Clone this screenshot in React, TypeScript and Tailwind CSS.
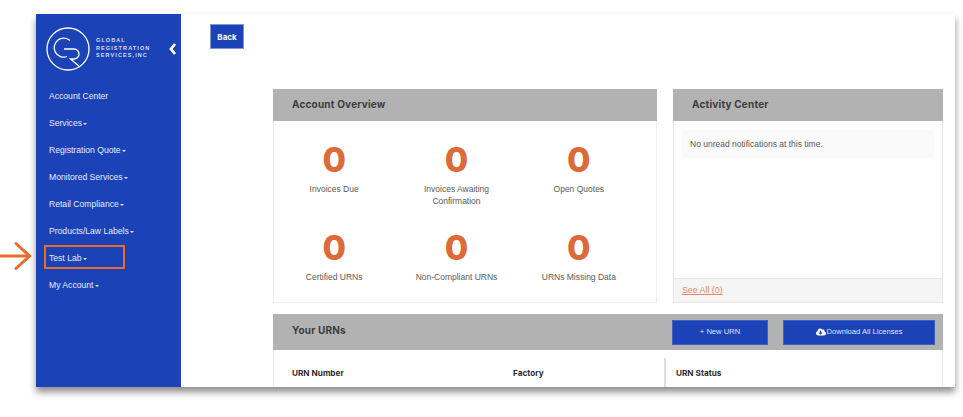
import { FaCloudDownloadAlt } from 'react-icons/fa';

const body = { fontFamily: '"Liberation Sans", Arial, sans-serif' };
const heading = { fontFamily: 'Inter, "Open Sans", sans-serif' };

const navItems = [
  { label: 'Account Center', caret: false },
  { label: 'Services', caret: true },
  { label: 'Registration Quote', caret: true },
  { label: 'Monitored Services', caret: true },
  { label: 'Retail Compliance', caret: true },
  { label: 'Products/Law Labels', caret: true },
  { label: 'Test Lab', caret: true },
  { label: 'My Account', caret: true },
];

const overviewRows = [
  ['Invoices Due', 'Invoices Awaiting Confirmation', 'Open Quotes'],
  ['Certified URNs', 'Non-Compliant URNs', 'URNs Missing Data'],
];

const Logo = () => (
  <svg width="46" height="46" viewBox="0 0 46 46" fill="none" stroke="white" strokeWidth="1.3" className="shrink-0">
    <circle cx="23" cy="23" r="21" />
    <path d="M25 14.5 A9.5 9.5 0 1 0 22 30.5" />
    <path d="M19 23 H29 A5 5 0 0 1 29 33 H25.5 L35 41" />
  </svg>
);

const App = () => {
  return (
    <div className="relative w-[963px] h-[417px] bg-white overflow-hidden" style={body}>
      {/* Callout arrow */}
      <svg
        width="32"
        height="32"
        viewBox="0 0 32 32"
        fill="none"
        stroke="#ec6a2c"
        strokeWidth="3"
        strokeLinecap="round"
        className="absolute left-0 top-[240px]"
      >
        <path d="M-2 16 H29" />
        <path d="M16 3.5 L29.5 16 L16 28.5" />
      </svg>

      <div className="pt-[14px] pl-[36px]">
        <div className="w-[919px] h-[373px] flex overflow-hidden bg-white shadow-[0_5px_7px_rgba(0,0,0,0.45)]">
          {/* Sidebar */}
          <aside className="w-[145px] shrink-0 bg-[#1b43b7] text-[#e6eaf8] relative">
            <div className="flex items-center pt-[1px] pl-[9px] h-[68px]">
              <Logo />
              <div className="ml-[5px] text-[5.5px] leading-[7.5px] tracking-[1.1px] font-bold text-[#d7def5]">
                <div>GLOBAL</div>
                <div>REGISTRATION</div>
                <div>SERVICES,INC</div>
              </div>
              <svg width="8" height="12" viewBox="0 0 8 12" className="ml-auto mr-[4px]">
                <path d="M6 1 L2 6 L6 11" fill="none" stroke="white" strokeWidth="2.8" />
              </svg>
            </div>
            <nav className="pl-[13px] pt-[1px]">
              {navItems.map((item) => (
                <div key={item.label} className="h-[27px] flex items-center text-[8.6px]">
                  {item.label}
                  {item.caret && (
                    <span className="ml-[1.5px] mt-[1px] border-x-[2px] border-t-[2px] border-x-transparent border-t-[#e6eaf8]" />
                  )}
                </div>
              ))}
            </nav>
            {/* Highlight round Test Lab */}
            <div className="absolute left-[8px] top-[231px] w-[81px] h-[24px] border-2 border-[#ec6a2c]" />
          </aside>

          {/* Main */}
          <main className="flex-1 min-w-0">
            <div className="pt-[10px] pl-[29px] h-[75px] flex items-start">
              <button
                className="w-[34px] h-[25px] bg-[#1b43b7] border border-[#7f95d8] text-white text-[8px] font-bold"
                style={heading}
              >
                Back
              </button>
            </div>

            <div className="ml-[92px] w-[670px]">
              <div className="flex gap-[16px]">
                {/* Account Overview */}
                <section className="w-[384px] h-[214px] border border-[#ececec]">
                  <div className="h-[32px] -mx-px -mt-px bg-[#b2b2b2] flex items-center pl-[19px]">
                    <h2 className="text-[10px] font-bold text-[#3d3d3d] tracking-[0.2px] mb-[1px]" style={heading}>
                      Account Overview
                    </h2>
                  </div>
                  <div className="-ml-px pr-[16px]">
                    {overviewRows.map((row, i) => (
                      <div key={i} className="grid grid-cols-3 h-[88px] pt-[22px]">
                        {row.map((label) => (
                          <div key={label} className="text-center">
                            <div className="text-[34px] leading-[34px] font-extrabold text-[#dd6b39]" style={heading}>
                              0
                            </div>
                            <p className="mt-[6px] mx-auto w-[96px] text-[8.5px] leading-[12px] text-[#5a5a5a]">{label}</p>
                          </div>
                        ))}
                      </div>
                    ))}
                  </div>
                </section>

                {/* Activity Center */}
                <section className="flex-1 h-[214px] border border-[#e6e6e6] flex flex-col">
                  <div className="h-[32px] -mx-px -mt-px bg-[#b2b2b2] flex items-center pl-[19px]">
                    <h2 className="text-[10px] font-bold text-[#3d3d3d] tracking-[0.2px] mb-[1px]" style={heading}>
                      Activity Center
                    </h2>
                  </div>
                  <div className="flex-1 px-[8px] pt-[9px]">
                    <div className="h-[28px] bg-[#fafafa] flex items-center pl-[8px] pt-[1px] text-[8.5px] text-[#5a5a5a]">
                      No unread notifications at this time.
                    </div>
                  </div>
                  <div className="h-[24px] bg-[#f5f5f5] border-t border-[#e6e6e6] flex items-center pl-[8px] pt-[1px] text-[8.8px] text-[#e08a6a] underline">
                    See All (0)
                  </div>
                </section>
              </div>

              {/* Your URNs */}
              <section className="mt-[11px] border-x border-[#ececec] h-[80px]">
                <div className="h-[36px] -mx-px bg-[#b2b2b2] flex items-center pl-[19px] pr-[8px]">
                  <h2 className="text-[10px] font-bold text-[#3d3d3d] tracking-[0.2px] mb-[4px]" style={heading}>
                    Your URNs
                  </h2>
                  <button className="ml-auto w-[96px] h-[25px] bg-[#1b43b7] border border-[#3f60bf] text-[#dfe5f7] text-[7.6px]">
                    + New URN
                  </button>
                  <button className="ml-[15px] w-[152px] h-[25px] bg-[#1b43b7] border border-[#3f60bf] text-[#dfe5f7] text-[7.6px] flex items-center justify-center gap-[1px]">
                    <FaCloudDownloadAlt className="text-white text-[10px]" />
                    Download All Licenses
                  </button>
                </div>
                <div className="flex pt-[8px] text-[8.2px] font-bold text-[#2d2d2d]" style={heading}>
                  <div className="w-[239px] pl-[18px] pt-[9px]">URN Number</div>
                  <div className="w-[151px] pt-[9px]">Factory</div>
                  <div className="pl-[10px] pt-[9px] h-[40px] border-l-2 border-[#dddddd]">URN Status</div>
                </div>
              </section>
            </div>
          </main>
        </div>
      </div>
    </div>
  );
};

export default App;
